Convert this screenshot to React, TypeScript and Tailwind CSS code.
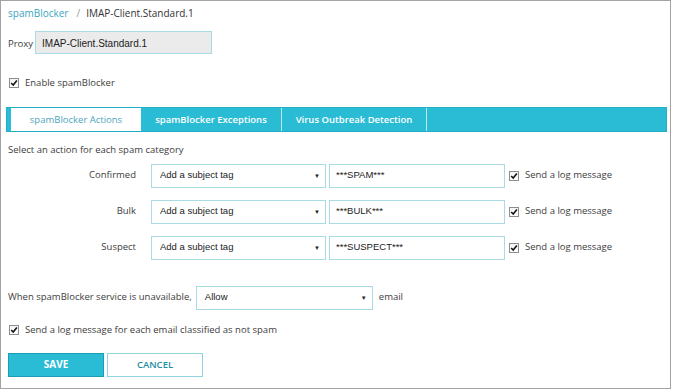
import React from 'react';

const label = "font-['Open_Sans',sans-serif] text-[9.5px] text-[#3d3d3d]";
const value = "font-['Liberation_Sans',Arial,sans-serif] text-[9.5px] text-[#222]";

function Check() {
  return (
    <span className="flex h-[10px] w-[10px] shrink-0 items-center justify-center border border-[#8d8d8d] bg-gradient-to-b from-[#f4f4f4] to-white">
      <svg viewBox="0 0 10 10" className="h-[8px] w-[8px]">
        <path d="M1.5 5 L4 7.6 L8.6 1.8" fill="none" stroke="#111" strokeWidth="1.9" />
      </svg>
    </span>
  );
}

function FakeSelect({ text, width }: { text: string; width: string }) {
  return (
    <div className={`flex h-[24px] items-center justify-between border border-[#a9dbe3] bg-white pl-[8px] pr-[5px] ${width}`}>
      <span className={value}>{text}</span>
      <span className="text-[6px] leading-none text-[#222]">▼</span>
    </div>
  );
}

const rows = [
  { name: 'Confirmed', tag: '***SPAM***' },
  { name: 'Bulk', tag: '***BULK***' },
  { name: 'Suspect', tag: '***SUSPECT***' },
];

export default function App() {
  return (
    <div className="h-[389px] w-[671px] border border-[#a3a3a3] bg-white">
      {/* breadcrumb */}
      <div className={`mt-[4px] ml-[7px] flex h-[16px] items-center ${label} text-[10px]`}>
        <span className="text-[#3ba6c0]">spamBlocker</span>
        <span className="ml-[8px] mr-[6px] text-[#999]">/</span>
        <span className="text-[#333]">IMAP-Client.Standard.1</span>
      </div>

      {/* proxy */}
      <div className="mt-[10px] ml-[7px] flex items-end">
        <span className={`${label} pb-[3px]`}>Proxy</span>
        <div className="ml-[2px] flex h-[23px] w-[177px] items-start border border-[#a9dbe3] bg-[#ebebeb] pl-[6px] pt-[4px]">
          <span className={`${value} text-[10px]`}>IMAP-Client.Standard.1</span>
        </div>
      </div>

      <div className="mt-[22px] ml-[8px] flex items-center gap-[6px]">
        <Check />
        <span className={label}>Enable spamBlocker</span>
      </div>

      {/* tabs */}
      <div className="mt-[17px] ml-[5px] flex h-[25px] w-[661px] border border-[#22aec6] bg-[#2bbcd5] pl-[4px]">
        <div className="flex w-[130px] items-center justify-center bg-white">
          <span className={`${label} text-[#4aa5bc]`}>spamBlocker Actions</span>
        </div>
        <div className="flex w-[141px] items-center justify-center border-r border-[#bfe9f0]">
          <span className="font-['Open_Sans',sans-serif] text-[9.5px] font-semibold text-white">spamBlocker Exceptions</span>
        </div>
        <div className="flex w-[145px] items-center justify-center border-r border-[#bfe9f0]">
          <span className="font-['Open_Sans',sans-serif] text-[9.5px] font-semibold text-white">Virus Outbreak Detection</span>
        </div>
      </div>

      <div className={`mt-[11px] ml-[7px] ${label}`}>Select an action for each spam category</div>

      <div className="mt-[6px] flex flex-col gap-[12px]">
        {rows.map((r) => (
          <div key={r.name} className="flex items-center">
            <div className={`w-[135px] pb-[1px] text-right ${label}`}>{r.name}</div>
            <div className="ml-[15px]">
              <FakeSelect text="Add a subject tag" width="w-[175px]" />
            </div>
            <div className="ml-[3px] flex h-[24px] w-[176px] items-center border border-[#a9dbe3] bg-white pl-[6px] pb-[1px]">
              <span className={value}>{r.tag}</span>
            </div>
            <div className="ml-[4px] flex items-center gap-[6px]">
              <Check />
              <span className={label}>Send a log message</span>
            </div>
          </div>
        ))}
      </div>

      <div className="mt-[26px] ml-[7px] flex items-center">
        <span className={label}>When spamBlocker service is unavailable,</span>
        <div className="ml-[4px]">
          <FakeSelect text="Allow" width="w-[177px]" />
        </div>
        <span className={`ml-[6px] ${label}`}>email</span>
      </div>

      <div className="mt-[13px] ml-[8px] flex items-center gap-[6px]">
        <Check />
        <span className={label}>Send a log message for each email classified as not spam</span>
      </div>

      <div className="mt-[16px] ml-[7px] flex gap-[3px]">
        <button className="flex h-[24px] w-[96px] items-center justify-center border border-[#1a9fb6] bg-[#2bbcd5] font-['Open_Sans',sans-serif] text-[10px] font-bold text-white">
          SAVE
        </button>
        <button className="flex h-[24px] w-[96px] items-center justify-center border border-[#8fd4df] bg-white font-['Open_Sans',sans-serif] text-[9.5px] font-semibold text-[#1f8ea3]">
          CANCEL
        </button>
      </div>
    </div>
  );
}
